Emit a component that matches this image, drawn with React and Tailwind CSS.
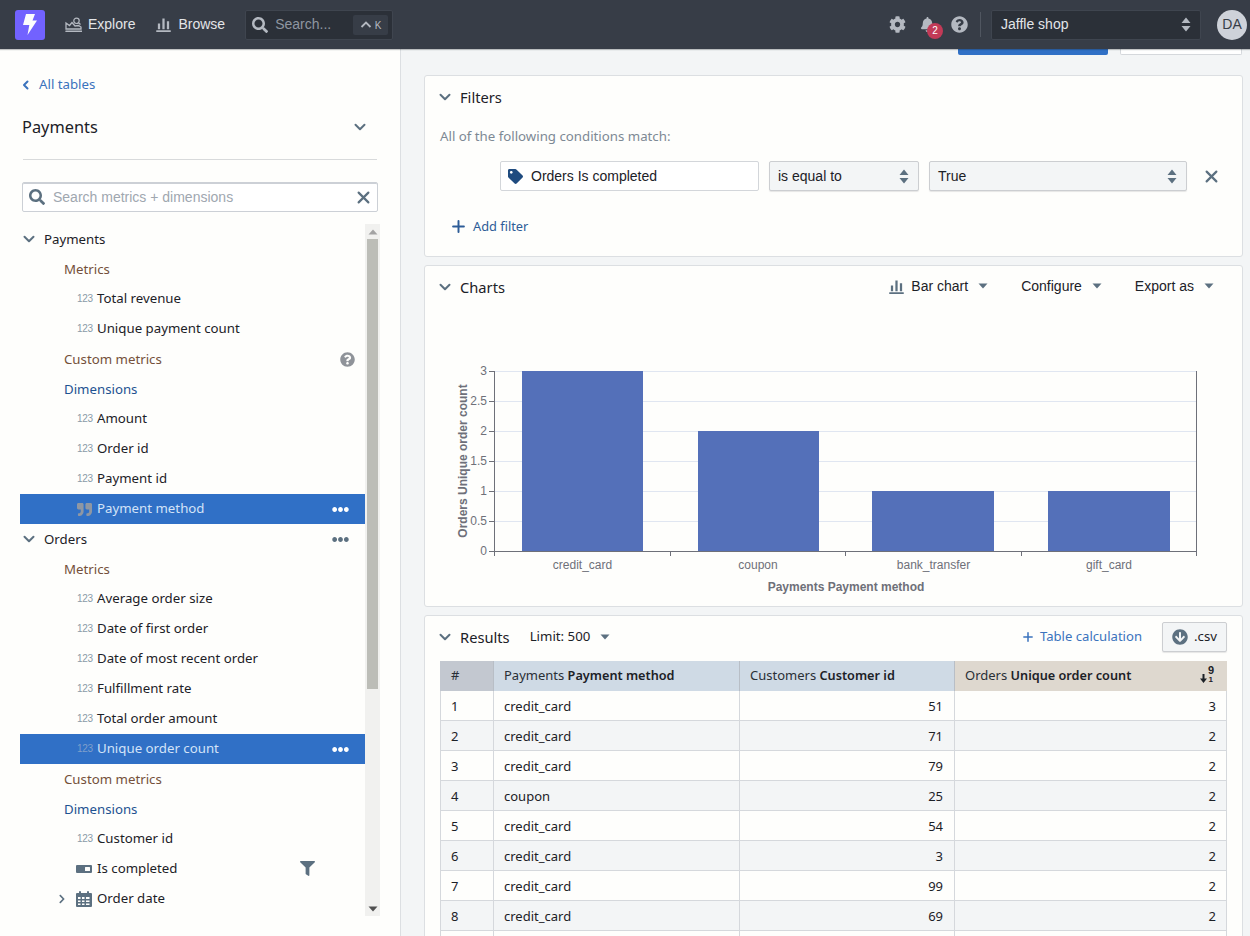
import React from "react";
import { FaCog, FaBell, FaQuestionCircle, FaFilter, FaTag, FaQuoteRight, FaArrowCircleDown, FaSearch, FaChevronRight, FaEllipsisH } from "react-icons/fa";

const Chev = ({ className = "" }) => (
  <svg width="12" height="12" viewBox="0 0 12 12" className={className}>
    <path d="M1.500 3.800 6 8.300l4.500-4.500" fill="none" stroke="currentColor" strokeWidth="2" strokeLinecap="round" strokeLinejoin="round" />
  </svg>
);
const ChevLeft = ({ className = "" }) => (
  <svg width="8" height="10" viewBox="0 0 8 10" className={className}>
    <path d="M5.500 1.500 2 5l3.500 3.500" fill="none" stroke="currentColor" strokeWidth="2" strokeLinecap="round" strokeLinejoin="round" />
  </svg>
);
const Cross = ({ size = 12, className = "" }) => (
  <svg width={size} height={size} viewBox="0 0 12 12" className={className}>
    <path d="M1.500 1.500l9 9M10.500 1.500l-9 9" fill="none" stroke="currentColor" strokeWidth="2" strokeLinecap="round" />
  </svg>
);
const Plus = ({ size = 12, className = "" }) => (
  <svg width={size} height={size} viewBox="0 0 12 12" className={className}>
    <path d="M6 1v10M1 6h10" fill="none" stroke="currentColor" strokeWidth="1.800" strokeLinecap="round" />
  </svg>
);
const Caret = ({ className = "" }) => (
  <svg width="10" height="6" viewBox="0 0 10 6" className={className}>
    <path d="M0.500 0.500h9L5 5.500z" fill="currentColor" />
  </svg>
);
const UpDown = ({ className = "" }) => (
  <svg width="10" height="15" viewBox="0 0 10 15" className={className}>
    <path d="M5 0.500 9.500 6h-9zM5 14.500 0.500 9h9z" fill="currentColor" />
  </svg>
);
const BarIcon = ({ className = "", size = 16 }) => (
  <svg width={size} height={size} viewBox="0 0 16 16" className={className}>
    <path d="M1 14h14a1 1 0 0 1 0 2H1a1 1 0 0 1 0-2zM2 7h2.400v6H2zM6.800 1.500h2.400V13H6.800zM11.600 4.500h2.400V13h-2.400z" fill="currentColor" />
  </svg>
);
const ExploreIcon = ({ className = "" }) => (
  <svg width="17" height="16" viewBox="0 0 17 16" className={className}>
    <path d="M1 14.200h15.500" stroke="currentColor" strokeWidth="1.600" fill="none" strokeLinecap="round" />
    <path d="M1 12V6l3.500 2.500L7 5.500l3 3.500 3.500-.5 2.500 1.500V12H1z" fill="none" stroke="currentColor" strokeWidth="1.300" />
    <circle cx="11.500" cy="3.800" r="2.700" fill="#373d47" stroke="currentColor" strokeWidth="1.200" />
    <path d="m13.500 5.800 2 1.800" stroke="currentColor" strokeWidth="1.300" />
  </svg>
);
const Logo = () => (
  <div className="w-[30px] h-[30px] rounded-[3px] bg-[#7262ff] flex items-center justify-center">
    <svg width="14" height="21" viewBox="0 0 14 21">
      <path d="M3 0h9L9.500 6.500H14L4.500 21l1.800-10H0z" fill="#fdfdfd" />
    </svg>
  </div>
);
const BoolIcon = () => (
  <svg width="16" height="8" viewBox="0 0 16 8" className="-ml-[1px]">
    <path d="M1 0h14a1 1 0 0 1 1 1v6a1 1 0 0 1-1 1H1a1 1 0 0 1-1-1V1a1 1 0 0 1 1-1zm8.500 2a.5.5 0 0 0-.5.5v3a.5.5 0 0 0 .5.5h4a.5.5 0 0 0 .5-.5v-3a.5.5 0 0 0-.5-.5z" fill="#5c7080" fillRule="evenodd" />
  </svg>
);
const CalIcon = () => (
  <svg width="16" height="16" viewBox="0 0 16 16" className="-ml-[1px]">
    <path d="M1 2h2V1a1 1 0 0 1 2 0v1h6V1a1 1 0 0 1 2 0v1h2a1 1 0 0 1 1 1v12a1 1 0 0 1-1 1H1a1 1 0 0 1-1-1V3a1 1 0 0 1 1-1zm1 4v2h2.500V6zm4 0v2h2.500V6zm4 0v2h3.500V6zM2 9.500V11h2.500V9.500zm4 0V11h2.500V9.500zm4 0V11h3.500V9.500zM2 12.500V14h2.500v-1.500zm4 0V14h2.500v-1.500zm4 0V14h3.500v-1.500z" fill="#5c7080" fillRule="evenodd" />
  </svg>
);
const SortIcon = () => (
  <div className="relative w-[14px] h-[16px] text-[#1c2127] font-bold">
    <span className="absolute right-0 -top-[4px] text-[11px] leading-[12px] font-['Liberation_Sans',sans-serif]">9</span>
    <span className="absolute right-[1px] top-[7px] text-[8px] leading-[9px] font-['Liberation_Sans',sans-serif]">1</span>
    <svg width="7" height="9" viewBox="0 0 7 9" className="absolute left-0 top-[6px]">
      <path d="M2.500 0h2v4.500H7L3.500 9 0 4.500h2.500z" fill="currentColor" />
    </svg>
  </div>
);

const Num = () => <span className="w-[16px] text-[10px] leading-none tracking-[-0.3px] text-[#8a9ba8] font-['Liberation_Sans',sans-serif]">123</span>;
const Group = ({ children, color }) => (
  <div className={`h-[30px] flex items-center pl-[44px] text-[13.25px] ${color}`}><span className="mt-[1px]">{children}</span></div>
);
const Item = ({ label, icon, selected, right, expander }) => (
  <div className={`relative h-[30px] flex items-center pl-[57px] pr-[16px] text-[13.25px] ${selected ? "bg-[#3070c6] text-[#d3e3f8]" : "text-[#1c2127]"}`}>
    {expander && <FaChevronRight className="absolute left-[37px] text-[#5c7080]" size={10} />}
    <span className="w-[20px] flex items-center">{icon || <Num />}</span>
    <span className="-mt-[1px]">{label}</span>
    {right && <span className="ml-auto flex items-center">{right}</span>}
  </div>
);
const Table = ({ label, right }) => (
  <div className="h-[30px] flex items-center pl-[3px] pr-[16px] text-[13.25px] text-[#1c2127]">
    <Chev className="text-[#5c7080] mr-[9px]" />
    <span className="mt-[1px]">{label}</span>
    {right && <span className="ml-auto flex items-center">{right}</span>}
  </div>
);
const Dots = ({ className }) => <FaEllipsisH size={17} className={className} />;

const Sidebar = () => (
  <aside className="w-[401px] shrink-0 bg-[#fefefc] border-r border-[#dcdfe2] pl-[20px] pt-[26px] flex flex-col h-full overflow-hidden">
    <div className="flex items-center gap-[9px] h-[18px] pl-[2px] mt-[1px] text-[13.25px] text-[#3b73bd]">
      <ChevLeft />
      <span>All tables</span>
    </div>
    <div className="flex items-center justify-between h-[24px] mt-[21px] pl-[2px] pr-[34px] text-[16.35px] text-[#1c2127]">
      <span>Payments</span>
      <Chev className="text-[#5c7080]" />
    </div>
    <div className="h-px bg-[#d8dadb] mt-[20px] ml-[3px] mr-[23px]" />
    <div className="h-[30px] mt-[22px] ml-[2px] mr-[22px] bg-white border border-[#ccd0d6] rounded-[2px] shadow-[inset_0_1px_0_#ccd0d6] flex items-center px-[6px] text-[14px] text-[#a0a7b0] font-['Liberation_Sans',sans-serif]">
      <FaSearch size={16} className="text-[#5c7080] mr-[8px]" />
      <span>Search metrics + dimensions</span>
      <Cross size={13} className="ml-auto mr-[1px] text-[#5c7080]" />
    </div>
    <div className="flex mt-[12px] w-[360px] h-[692px] overflow-hidden">
      <div className="w-[345px] shrink-0">
        <Table label="Payments" />
        <Group color="text-[#74503a]">Metrics</Group>
        <Item label="Total revenue" />
        <Item label="Unique payment count" />
        <div className="h-[30px] flex items-center pl-[44px] pr-[10px] text-[13.25px] text-[#74503a]">
          <span className="mt-[1px]">Custom metrics</span>
          <FaQuestionCircle size={15} className="ml-auto mt-[1px] text-[#8f9399]" />
        </div>
        <Group color="text-[#1d5291]">Dimensions</Group>
        <Item label="Amount" />
        <Item label="Order id" />
        <Item label="Payment id" />
        <Item label="Payment method" selected icon={<FaQuoteRight size={15} className="text-[#8f97a3]" />} right={<Dots className="text-white" />} />
        <Table label="Orders" right={<Dots className="text-[#5c7080]" />} />
        <Group color="text-[#74503a]">Metrics</Group>
        <Item label="Average order size" />
        <Item label="Date of first order" />
        <Item label="Date of most recent order" />
        <Item label="Fulfillment rate" />
        <Item label="Total order amount" />
        <Item label="Unique order count" selected icon={<span className="w-[16px] text-[10px] leading-none tracking-[-0.3px] text-[#7f9fcb] font-['Liberation_Sans',sans-serif]">123</span>} right={<Dots className="text-white" />} />
        <Group color="text-[#74503a]">Custom metrics</Group>
        <Group color="text-[#1d5291]">Dimensions</Group>
        <Item label="Customer id" />
        <div className="relative">
          <Item label="Is completed" icon={<BoolIcon />} />
          <FaFilter size={15} className="absolute left-[280px] top-[7px] text-[#5c7080]" />
        </div>
        <Item label="Order date" icon={<CalIcon />} expander />
      </div>
      <div className="w-[15px] shrink-0 bg-[#f1f1ef] flex flex-col items-center">
        <div className="h-[15px] flex items-center"><Caret className="rotate-180 text-[#a3a3a3]" /></div>
        <div className="w-[11px] h-[450px] bg-[#bcbdb7]" />
        <div className="mt-auto h-[15px] flex items-center"><Caret className="text-[#505050]" /></div>
      </div>
    </div>
  </aside>
);

const Card = ({ className = "", children }) => (
  <section className={`bg-[#fefefc] border border-[#dcdfe2] rounded-[3px] mb-[8px] ${className}`}>{children}</section>
);
const Section = ({ title }) => (
  <div className="flex items-center gap-[9px] text-[14.7px] text-[#1c2127]">
    <Chev className="text-[#5c7080] ml-[14px]" />
    <span>{title}</span>
  </div>
);

const Filters = () => (
  <Card className="h-[182px] pt-[11px]">
    <div className="h-[20px] flex items-center"><Section title="Filters" /></div>
    <div className="mt-[19px] pl-[15px] text-[13.25px] leading-[20px] text-[#7d8994]">All of the following conditions match:</div>
    <div className="mt-[15px] flex items-center pl-[75px] font-['Liberation_Sans',sans-serif] text-[14px] text-[#1c2127]">
      <div className="w-[259px] h-[30px] bg-white border border-[#d3d6da] rounded-[2px] flex items-center pl-[7px] gap-[8px]">
        <FaTag size={15} className="text-[#1f4b7f]" />
        <span>Orders Is completed</span>
      </div>
      <div className="w-[150px] h-[30px] ml-[10px] bg-[#f3f5f6] border border-[#ccced1] rounded-[2px] shadow-[0_1px_1px_rgba(16,22,26,0.1)] flex items-center justify-between pl-[8px] pr-[9px]">
        <span>is equal to</span>
        <UpDown className="text-[#5c7080]" />
      </div>
      <div className="w-[258px] h-[30px] ml-[10px] bg-[#f3f5f6] border border-[#ccced1] rounded-[2px] shadow-[0_1px_1px_rgba(16,22,26,0.1)] flex items-center justify-between pl-[8px] pr-[9px]">
        <span>True</span>
        <UpDown className="text-[#5c7080]" />
      </div>
      <Cross size={13} className="ml-[18px] text-[#5c7080]" />
    </div>
    <div className="mt-[25px] pl-[27px] flex items-center gap-[8px] h-[20px] text-[12.8px] text-[#2d5c97]">
      <Plus size={13} />
      <span className="mt-[1px]">Add filter</span>
    </div>
  </Card>
);

const Menu = ({ label, icon, className = "" }) => (
  <div className={`flex items-center font-['Liberation_Sans',sans-serif] text-[14px] text-[#1c2127] ${className}`}>
    {icon}
    <span>{label}</span>
    <Caret className="ml-[10px] text-[#5c7080]" />
  </div>
);

const Chart = () => {
  const ys = [["3", 371], ["2.5", 401], ["2", 431], ["1.5", 461], ["1", 491], ["0.5", 521], ["0", 551]];
  const xs = [494, 670, 845, 1021, 1196];
  const bars = [[522, 121, 371], [698, 121, 431], [872, 122, 491], [1048, 122, 491]];
  const cats = [["credit_card", 582.500], ["coupon", 758], ["bank_transfer", 933.500], ["gift_card", 1109]];
  const ox = 425, oy = 311;
  return (
    <svg width="816" height="294" viewBox={`${ox} ${oy} 816 294`} className="block" fontFamily="'Liberation Sans',sans-serif">
      {ys.slice(0, 6).map(([, y]) => <line key={y} x1="494" x2="1196" y1={y + 0.5} y2={y + 0.5} stroke="#e0e6f1" />)}
      <line x1="1196.500" x2="1196.500" y1="371" y2="551" stroke="#6e7079" />
      {bars.map(([x, w, y]) => <rect key={x} x={x} y={y} width={w} height={551 - y} fill="#5470b9" />)}
      <line x1="494" x2="1197" y1="551.500" y2="551.500" stroke="#6e7079" />
      <line x1="494.500" x2="494.500" y1="371" y2="551" stroke="#6e7079" />
      {xs.map((x) => <line key={x} x1={x + 0.5} x2={x + 0.5} y1="551" y2="556" stroke="#6e7079" />)}
      {ys.map(([l, y]) => (
        <g key={l}>
          <line x1="489" x2="494" y1={y + 0.5} y2={y + 0.5} stroke="#6e7079" />
          <text x="487" y={y + 4} textAnchor="end" fontSize="12" fill="#6e7079">{l}</text>
        </g>
      ))}
      {cats.map(([l, x]) => <text key={l} x={x} y="569" textAnchor="middle" fontSize="12" fill="#6e7079">{l}</text>)}
      <text x="846" y="591" textAnchor="middle" fontSize="12" fontWeight="700" fill="#6e7079">Payments Payment method</text>
      <text transform="translate(467 461) rotate(-90)" textAnchor="middle" fontSize="12" fontWeight="700" fill="#6e7079">Orders Unique order count</text>
    </svg>
  );
};

const Charts = () => (
  <Card className="h-[342px] pt-[11px]">
    <div className="h-[20px] flex items-center">
      <Section title="Charts" />
      <div className="ml-auto flex items-center pr-[28px] -mt-[2px]">
        <Menu label="Bar chart" icon={<BarIcon size={15} className="text-[#5c7080] mr-[7px]" />} />
        <Menu label="Configure" className="ml-[33px]" />
        <Menu label="Export as" className="ml-[33px]" />
      </div>
    </div>
    <div className="mt-[14px]"><Chart /></div>
  </Card>
);

const rows = [
  ["1", "credit_card", 51, 3], ["2", "credit_card", 71, 2], ["3", "credit_card", 79, 2], ["4", "coupon", 25, 2],
  ["5", "credit_card", 54, 2], ["6", "credit_card", 3, 2], ["7", "credit_card", 99, 2], ["8", "credit_card", 69, 2], ["", "", "", ""],
];

const Results = () => (
  <Card className="pt-[6px] mb-0 h-[340px]">
    <div className="h-[30px] flex items-center pr-[15px]">
      <Section title="Results" />
      <div className="ml-[20px] -mt-[1px] flex items-center text-[13.25px] text-[#1c2127]">
        <span>Limit: 500</span>
        <Caret className="ml-[10px] text-[#5c7080]" />
      </div>
      <div className="ml-auto flex items-center gap-[7px] text-[13.1px] text-[#3b73bd]">
        <Plus size={10} />
        <span>Table calculation</span>
      </div>
      <div className="ml-[20px] w-[65px] h-[30px] bg-[#f3f5f6] border border-[#ccced1] rounded-[2px] shadow-[0_1px_1px_rgba(16,22,26,0.1)] flex items-center pl-[9px] gap-[6px] text-[13.25px] text-[#1c2127]">
        <FaArrowCircleDown size={16} className="text-[#5c7080]" />
        <span>.csv</span>
      </div>
    </div>
    <div className="mt-[9px] mx-[15px] w-[787px]">
      <div className="grid grid-cols-[54px_246px_215px_272px] h-[30px] bg-[#cfdae5] text-[13px] text-[#2a2f36]">
        <div className="bg-[#c3c8d0] flex items-center pl-[11px] border-r border-[#b8bec6]">#</div>
        <div className="flex items-center pl-[10px] border-r border-[#b8bec6]"><span>Payments <b className="text-[12.7px] font-semibold text-[#1c2127]">Payment method</b></span></div>
        <div className="flex items-center pl-[10px] border-r border-[#b8bec6]"><span>Customers <b className="text-[12.7px] font-semibold text-[#1c2127]">Customer id</b></span></div>
        <div className="bg-[#ded8cf] flex items-center justify-between pl-[10px] pr-[13px]"><span>Orders <b className="text-[12.7px] font-semibold text-[#1c2127]">Unique order count</b></span><SortIcon /></div>
      </div>
      {rows.map(([n, a, b, c], i) => (
        <div key={i} className={`grid grid-cols-[53px_246px_215px_271px] h-[30px] text-[13px] text-[#1c2127] border-b border-[#d5d8dc] border-l border-r ${i % 2 ? "bg-[#f3f5f6]" : "bg-[#fefefc]"}`}>
          <div className="flex items-center pl-[10px] pt-[2px] border-r border-[#d5d8dc]">{n}</div>
          <div className="flex items-center pl-[10px] pt-[2px] border-r border-[#d5d8dc]">{a}</div>
          <div className="flex items-center justify-end pr-[11px] pt-[2px] border-r border-[#d5d8dc]">{b}</div>
          <div className="flex items-center justify-end pr-[10px] pt-[2px]">{c}</div>
        </div>
      ))}
    </div>
  </Card>
);

const Header = () => (
  <header className="h-[49px] shrink-0 relative z-10 bg-[#373d47] shadow-[0_1px_1px_rgba(16,22,26,0.25)] flex items-center pl-[15px] pr-[3px] text-[14px] text-[#e3e5e8] font-['Liberation_Sans',sans-serif]">
    <Logo />
    <ExploreIcon className="ml-[20px] text-[#b4b9c1]" />
    <span className="ml-[6px]">Explore</span>
    <BarIcon size={15} className="ml-[21px] text-[#b4b9c1]" />
    <span className="ml-[7px]">Browse</span>
    <div className="ml-[20px] w-[148px] h-[30px] bg-[#2b3038] border border-[#3f454f] rounded-[2px] flex items-center pl-[6px]">
      <FaSearch size={16} className="text-[#b4b9c1]" />
      <span className="ml-[7px] text-[#8f96a1]">Search...</span>
      <div className="ml-auto mr-[4px] w-[35px] h-[20px] bg-[#373d47] rounded-[2px] flex items-center justify-center gap-[3px] text-[#b4b9c1]">
        <svg width="12" height="7" viewBox="0 0 12 7"><path d="M1.500 6 6 1.500 10.500 6" fill="none" stroke="currentColor" strokeWidth="1.800" /></svg>
        <span className="text-[10px] mt-[2px]">K</span>
      </div>
    </div>
    <FaCog size={17} className="ml-auto text-[#b4b9c1]" />
    <div className="relative ml-[14px] w-[16px] h-[16px]">
      <FaBell size={15} className="text-[#b4b9c1]" />
      <span className="absolute left-[7px] top-[6px] w-[16px] h-[16px] rounded-full bg-[#c23a57] text-white text-[10px] flex items-center justify-center">2</span>
    </div>
    <FaQuestionCircle size={17} className="ml-[15px] text-[#b4b9c1]" />
    <div className="ml-[12px] w-px h-[25px] bg-[#505660]" />
    <div className="ml-[10px] w-[210px] h-[30px] bg-[#2b3038] border border-[#3f454f] rounded-[2px] flex items-center justify-between pl-[9px] pr-[9px]">
      <span>Jaffle shop</span>
      <UpDown className="text-[#b4b9c1]" />
    </div>
    <div className="ml-[16px] w-[30px] h-[30px] rounded-full bg-[#ced2d9] text-[#373d47] text-[14px] flex items-center justify-center">DA</div>
  </header>
);

export default function App() {
  return (
    <div className="h-[936px] w-[1250px] overflow-hidden flex flex-col bg-[#f3f5f6] font-['Noto_Sans',sans-serif]">
      <Header />
      <div className="flex flex-1 min-h-0">
        <Sidebar />
        <main className="flex-1 min-w-0 pl-[23px] pr-[7px] overflow-hidden">
          <div className="flex justify-end gap-[12px] h-[6px] mb-[20px] pr-[1px]">
            <div className="w-[150px] h-[6px] bg-[#3070c6] rounded-b-[2px]" />
            <div className="w-[122px] h-[6px] bg-white border border-t-0 border-[#d5d8dc] rounded-b-[2px]" />
          </div>
          <Filters />
          <Charts />
          <Results />
        </main>
      </div>
    </div>
  );
}
